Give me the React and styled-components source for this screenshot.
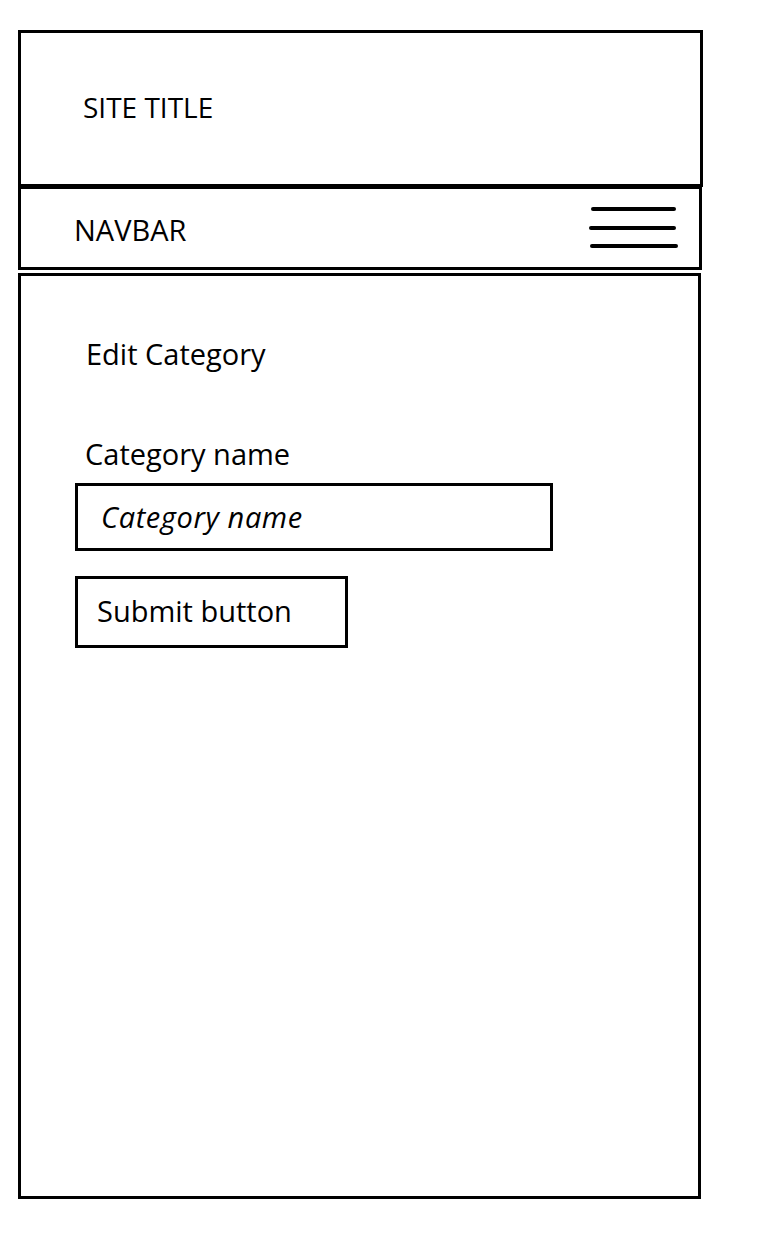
import styled, { createGlobalStyle } from "styled-components";

const GlobalStyle = createGlobalStyle`
  html, body {
    margin: 0;
    padding: 0;
    background: #fff;
  }
  body {
    font-family: "Open Sans", "Noto Sans", sans-serif;
    color: #000;
  }
`;

const App = () => {
  return (
    <>
      <GlobalStyle />
      <Page>
        <Header>
          <SiteTitle>SITE TITLE</SiteTitle>
        </Header>
        <Navbar>
          <NavLabel>NAVBAR</NavLabel>
          <MenuIcon />
        </Navbar>
        <Main>
          <Title>Edit Category</Title>
          <Form onSubmit={(e) => e.preventDefault()}>
            <Label htmlFor="category-name">Category name</Label>
            <Input id="category-name" placeholder="Category name" />
            <Button type="submit">Submit button</Button>
          </Form>
        </Main>
      </Page>
    </>
  );
};

const MenuIcon = () => (
  <Burger width="92" height="50" viewBox="0 0 92 50">
    <line x1="5" y1="4" x2="86" y2="4" />
    <line x1="3" y1="23" x2="86" y2="23" />
    <line x1="4" y1="41" x2="88" y2="41" />
  </Burger>
);

const Page = styled.div`
  display: flex;
  flex-direction: column;
  align-items: flex-start;
  padding: 30px 0 56px 18px;
`;

const Header = styled.header`
  box-sizing: border-box;
  width: 685px;
  height: 157px;
  border: 3px solid #000;
  display: flex;
  align-items: center;
  padding: 0 0 4px 62px;
`;

const SiteTitle = styled.h1`
  margin: 0;
  font-size: 28px;
  font-weight: 400;
  line-height: 38px;
`;

const Navbar = styled.nav`
  box-sizing: border-box;
  width: 684px;
  height: 83px;
  border: 3px solid #000;
  border-top-width: 2px;
  display: flex;
  align-items: center;
  justify-content: space-between;
  padding: 4px 19px 0 53px;
`;

const NavLabel = styled.span`
  font-size: 29px;
  line-height: 38px;
`;

const Burger = styled.svg`
  display: block;
  stroke: #000;
  stroke-width: 4;
  stroke-linecap: round;
`;

const Main = styled.main`
  box-sizing: border-box;
  width: 683px;
  height: 926px;
  margin-top: 3px;
  border: 3px solid #000;
  padding: 59px 0 0 54px;
`;

const Title = styled.h2`
  margin: 0 0 62px 11px;
  font-size: 29px;
  font-weight: 400;
  line-height: 38px;
`;

const Form = styled.form`
  display: flex;
  flex-direction: column;
  align-items: flex-start;
`;

const Label = styled.label`
  margin: 0 0 10px 10px;
  font-size: 29px;
  line-height: 38px;
`;

const Input = styled.input`
  box-sizing: border-box;
  width: 478px;
  height: 68px;
  margin: 0 0 25px;
  padding: 0 0 2px 23px;
  border: 3px solid #000;
  border-radius: 0;
  outline: none;
  font-family: inherit;
  font-size: 29px;
  color: #000;

  &::placeholder {
    color: #000;
    font-style: italic;
    letter-spacing: 0.6px;
    opacity: 1;
  }
`;

const Button = styled.button`
  box-sizing: border-box;
  width: 273px;
  height: 72px;
  padding: 0 0 4px 19px;
  border: 3px solid #000;
  border-radius: 0;
  background: #fff;
  text-align: left;
  font-family: inherit;
  font-size: 29px;
  color: #000;
  cursor: pointer;
`;

export default App;
